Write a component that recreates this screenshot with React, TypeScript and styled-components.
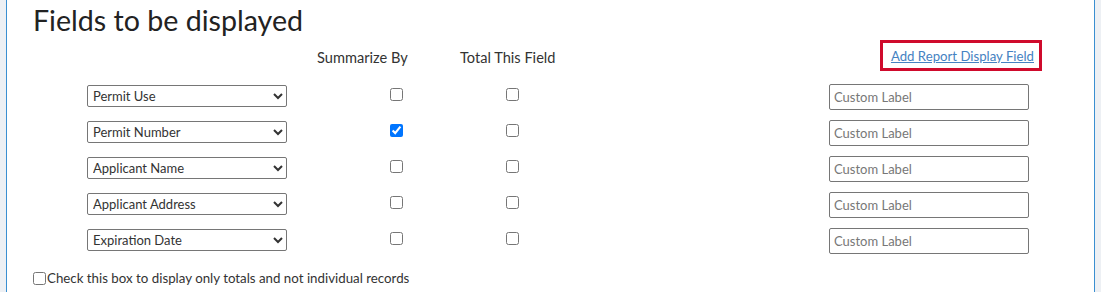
import React from "react";
import styled, { createGlobalStyle } from "styled-components";

const Global = createGlobalStyle`
  html, body { margin: 0; padding: 0; background: #edf0f4; }
  body { font-family: Lato, "Liberation Sans", sans-serif; color: #333; }
`;

const Panel = styled.div`
  margin: 0 6px;
  min-height: 320px;
  background: #fff;
  border-left: 1px solid #3a8fd1;
  border-right: 1px solid #3a8fd1;
  padding: 0 65px 0 26px;
  box-sizing: border-box;
`;

const Title = styled.h2`
  margin: 0;
  height: 40px;
  line-height: 40px;
  font-size: 28.6px;
  font-weight: 400;
  color: #222;
`;

const Grid = styled.div`
  margin-left: 54px;
  display: grid;
  grid-template-columns: 200px 173px 140px 1fr 200px;
  grid-template-rows: 39px repeat(5, 36px);
  align-items: start;
`;

const Header = styled.div<{ $pad?: number }>`
  margin-top: 8px;
  padding-left: ${(p) => p.$pad ?? 0}px;
  font-size: 14.6px;
  line-height: 20px;
  color: #333;
`;

const Highlight = styled.div`
  justify-self: end;
  margin-right: -13px;
  height: 25px;
  border: 3px solid #cf0a2c;
  padding: 0 5px 0 8px;
  display: flex;
  align-items: center;
`;

const Link = styled.a`
  font-size: 13.2px;
  color: #4582c2;
  text-decoration: underline;
  cursor: pointer;
`;

const Select = styled.select`
  margin-top: 6px;
  width: 200px;
  height: 22px;
  font-family: Lato, "Liberation Sans", sans-serif;
  font-size: 13px;
  color: #333;
  border: 1px solid #767676;
  border-radius: 2px;
  background: #fff;
  padding: 0 1px;
`;

const Check = styled.input<{ $left: number }>`
  margin: 9px 0 0 ${(p) => p.$left}px;
  width: 13px;
  height: 13px;
`;

const LabelInput = styled.input`
  margin-top: 5px;
  width: 200px;
  height: 26px;
  box-sizing: border-box;
  font-family: Lato, "Liberation Sans", sans-serif;
  font-size: 13px;
  color: #333;
  border: 1px solid #767676;
  border-radius: 2px;
  padding: 0 4px;
  &::placeholder { color: #777; }
`;

const Footer = styled.label`
  display: flex;
  align-items: center;
  margin-top: 9px;
  font-size: 13.3px;
  color: #333;
  line-height: 20px;
`;

const FooterCheck = styled.input`
  margin: 0 1px 0 0;
  width: 13px;
  height: 13px;
`;

const rows = [
  { field: "Permit Use", summarize: false },
  { field: "Permit Number", summarize: true },
  { field: "Applicant Name", summarize: false },
  { field: "Applicant Address", summarize: false },
  { field: "Expiration Date", summarize: false },
];

export default function App() {
  return (
    <>
      <Global />
      <Panel>
        <Title>Fields to be displayed</Title>
        <Grid>
          <div />
          <Header $pad={30}>Summarize By</Header>
          <Header>Total This Field</Header>
          <div />
          <Highlight>
            <Link>Add Report Display Field</Link>
          </Highlight>
          {rows.map((r) => (
            <React.Fragment key={r.field}>
              <Select defaultValue={r.field}>
                <option>{r.field}</option>
              </Select>
              <Check type="checkbox" $left={103} defaultChecked={r.summarize} />
              <Check type="checkbox" $left={46} />
              <div />
              <LabelInput placeholder="Custom Label" />
            </React.Fragment>
          ))}
        </Grid>
        <Footer>
          <FooterCheck type="checkbox" />
          Check this box to display only totals and not individual records
        </Footer>
      </Panel>
    </>
  );
}
